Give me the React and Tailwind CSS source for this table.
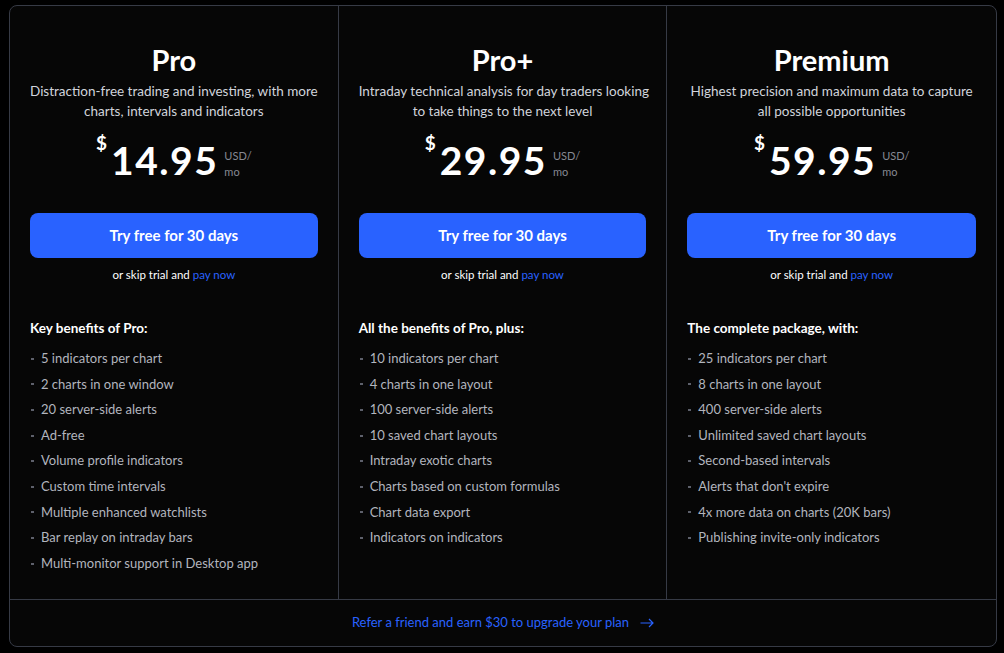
import React from "react";

const plans = [
  {
    name: "Pro",
    desc: ["Distraction-free trading and investing, with more", "charts, intervals and indicators"],
    price: "14.95",
    head: "Key benefits of Pro:",
    items: [
      "5 indicators per chart",
      "2 charts in one window",
      "20 server-side alerts",
      "Ad-free",
      "Volume profile indicators",
      "Custom time intervals",
      "Multiple enhanced watchlists",
      "Bar replay on intraday bars",
      "Multi-monitor support in Desktop app",
    ],
  },
  {
    name: "Pro+",
    desc: ["Intraday technical analysis for day traders looking", "to take things to the next level"],
    price: "29.95",
    head: "All the benefits of Pro, plus:",
    items: [
      "10 indicators per chart",
      "4 charts in one layout",
      "100 server-side alerts",
      "10 saved chart layouts",
      "Intraday exotic charts",
      "Charts based on custom formulas",
      "Chart data export",
      "Indicators on indicators",
    ],
  },
  {
    name: "Premium",
    desc: ["Highest precision and maximum data to capture", "all possible opportunities"],
    price: "59.95",
    head: "The complete package, with:",
    items: [
      "25 indicators per chart",
      "8 charts in one layout",
      "400 server-side alerts",
      "Unlimited saved chart layouts",
      "Second-based intervals",
      "Alerts that don't expire",
      "4x more data on charts (20K bars)",
      "Publishing invite-only indicators",
    ],
  },
];

function Column({ plan, last }) {
  return (
    <div className={"flex flex-col px-[20px] pt-[38px] " + (last ? "" : "border-r border-[#363a45]")}>
      <div className="text-center text-[29px] leading-[32px] font-bold text-white">{plan.name}</div>
      <div className="mt-[5px] whitespace-nowrap text-center text-[13.5px] leading-[20px] text-[#d1d4dc]">
        {plan.desc.map((d) => (
          <div key={d}>{d}</div>
        ))}
      </div>
      <div className="mt-[17px] flex h-[44px] items-center justify-center">
        <div className="flex items-start">
          <span className="mt-[-5px] mr-[4px] text-[19px] font-bold leading-[20px] text-white">$</span>
          <span className="text-[39px] font-bold leading-[44px] tracking-[1.5px] text-white">{plan.price}</span>
          <span className="ml-[6px] mt-[10px] text-[11px] leading-[16px] text-[#868993]">
            USD/
            <br />
            mo
          </span>
        </div>
      </div>
      <button className="mt-[31px] h-[45px] w-full rounded-[8px] bg-[#2962ff] text-[15px] font-bold text-white">
        Try free for 30 days
      </button>
      <div className="mt-[9px] text-center text-[11.5px] leading-[16px] text-white">
        or skip trial and <span className="text-[#2962ff]">pay now</span>
      </div>
      <div className="mt-[35px] text-[13.5px] font-bold leading-[20px] text-white">{plan.head}</div>
      <ul className="mt-[8px]">
        {plan.items.map((it) => (
          <li key={it} className="flex items-center text-[13px] leading-[25.6px] text-[#b2b5be]">
            <span className="ml-[1px] mr-[7px] inline-block h-[2px] w-[3px] bg-[#5d606b]"></span>
            {it}
          </li>
        ))}
      </ul>
    </div>
  );
}

export default function App() {
  return (
    <div className="h-[653px] w-[1004px] bg-black pl-[9px] pt-[5px]" style={{ fontFamily: 'Lato, sans-serif' }}>
      <div className="flex h-[642px] w-[988px] flex-col rounded-[8px] border border-[#363a45] bg-[#060606]">
        <div className="grid flex-1 grid-cols-3">
          {plans.map((p, i) => (
            <Column key={p.name} plan={p} last={i === 2} />
          ))}
        </div>
        <div className="flex h-[47px] items-center justify-center border-t border-[#363a45] text-[13px] text-[#2962ff]">
          <span>Refer a friend and earn $30 to upgrade your plan</span>
          <svg className="ml-[11px]" width="14" height="10" viewBox="0 0 14 10" fill="none" stroke="#2962ff" strokeWidth="1.2">
            <path d="M0.5 5h12.5M9 1l4 4-4 4" />
          </svg>
        </div>
      </div>
    </div>
  );
}
